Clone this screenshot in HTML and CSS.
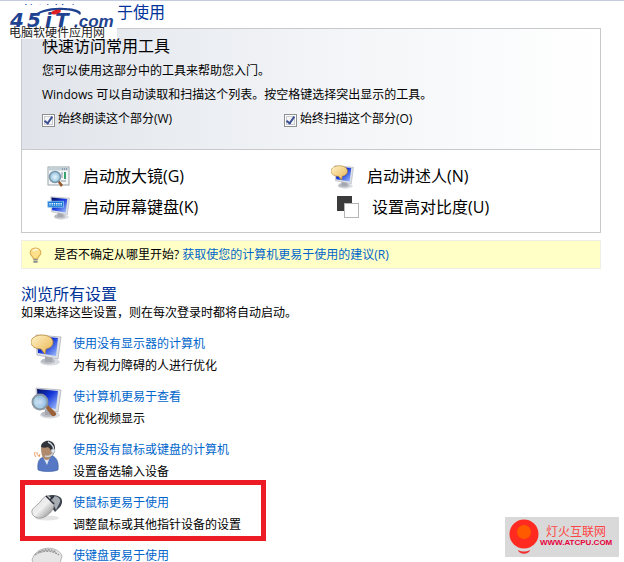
FILE: index.html
```html
<!DOCTYPE html>

<html lang="zh-CN">

  <head>

    <title>轻松访问中心</title>

    <meta charset="utf-8"/>

    <link rel="stylesheet" href="styles.css">

  </head>

  <body>

    <svg class="defs" width="0" height="0" aria-hidden="true">
      <defs>
        <linearGradient id="screen" x1="0" y1="0" x2="1" y2="1">
          <stop offset="0" stop-color="#06105c"/>
          <stop offset=".45" stop-color="#1233d8"/>
          <stop offset="1" stop-color="#a9c8ff"/>
        </linearGradient>
        <linearGradient id="bubble-fill" x1="0" y1="0" x2="1" y2="1">
          <stop offset="0" stop-color="#fff3cc"/>
          <stop offset="1" stop-color="#e9b44c"/>
        </linearGradient>
        <linearGradient id="silver" x1="0" y1="0" x2="1" y2="1">
          <stop offset="0" stop-color="#dcdcdc"/>
          <stop offset=".5" stop-color="#f0f0f0"/>
          <stop offset="1" stop-color="#777"/>
        </linearGradient>
        <radialGradient id="lens">
          <stop offset="0" stop-color="#e8f6fd"/>
          <stop offset="1" stop-color="#8fc1dd"/>
        </radialGradient>
        <symbol id="monitor" viewBox="0 0 32 32">
          <ellipse cx="19" cy="28" rx="10" ry="3.5" fill="#d9dce0"/>
          <ellipse cx="17" cy="27" rx="7" ry="3" fill="#b9bdc3"/>
          <path d="M14 21l8 2-1 5h-7z" fill="#a4a8ae"/>
          <path d="M5 1l25 2-3 22-21-4z" fill="#dde0e6" stroke="#a7abb3" stroke-width=".7"/>
          <path d="M6 2l21 2-2 18-18-3z" fill="url(#screen)"/>
        </symbol>
        <symbol id="bubble" viewBox="0 0 32 32">
          <path d="M11 1c6 0 11 3 11 7s-3 6-7 7l-1 5-4-5C4 15 0 12 0 8s5-7 11-7z" fill="url(#bubble-fill)" stroke="#b98a35" stroke-width=".8"/>
        </symbol>
        <symbol id="glass" viewBox="0 0 32 32">
          <path d="M14 20l3-2 8 8c1 2-2 4-4 3z" fill="#9a6038"/>
          <circle cx="9" cy="15" r="7.500" fill="url(#lens)" fill-opacity=".9" stroke="#8a98a5" stroke-width="2"/>
        </symbol>
      </defs>
    </svg>

    <main>
      <h1>使计算机更易于使用</h1>

      <section class="quick">
        <div class="intro">
          <h2>快速访问常用工具</h2>
          <p>您可以使用这部分中的工具来帮助您入门。</p>
          <p>Windows 可以自动读取和扫描这个列表。按空格键选择突出显示的工具。</p>
          <div class="options">
            <label><input type="checkbox" checked>始终朗读这个部分(W)</label>
            <label><input type="checkbox" checked>始终扫描这个部分(O)</label>
          </div>
        </div>
        <div class="tools">
          <a href="#magnifier">
            <svg class="tool-icon" viewBox="0 0 24 24">
              <rect x="1" y="2" width="21" height="18" fill="#f4f7f8" stroke="#9aa3a8"/>
              <path d="M2 4h19" stroke="#c3cfd6" stroke-width="3"/>
              <path d="M15 4h5" stroke="#4f6b86" stroke-dasharray="1 1"/>
              <path d="M18 7v7" stroke="#36a36c" stroke-width="2"/>
              <path d="M4 8h5M4 10h4M14 8h2M14 10h2M14 12h2M14 16h5" stroke="#8b979e"/>
              <path d="M10 16l2-1 4 5-2 2z" fill="#98572b"/>
              <circle cx="8" cy="12" r="5.500" fill="url(#lens)" stroke="#7c97aa" stroke-width="1.500"/>
            </svg>
            启动放大镜(G)
          </a>
          <a href="#narrator">
            <svg class="tool-icon" viewBox="0 0 32 32"><use href="#monitor"/><use href="#bubble"/></svg>
            启动讲述人(N)
          </a>
          <a href="#keyboard">
            <svg class="tool-icon" viewBox="0 0 32 32">
              <use href="#monitor"/>
              <path d="M1 7h21v8H1z" fill="#1679d8" stroke="#9cc9f2"/>
              <path d="M3 10h17M3 12h17" stroke="#e8f4ff" stroke-width="1.500" stroke-dasharray="2 1"/>
            </svg>
            启动屏幕键盘(K)
          </a>
          <a class="contrast" href="#contrast">
            <svg class="tool-icon" viewBox="0 0 24 24">
              <rect x="0" y="0" width="15" height="15" fill="#3b3b3b"/>
              <rect x="7.500" y="7.500" width="14" height="14" fill="#fff" stroke="#b5b5b5"/>
            </svg>
            设置高对比度(U)
          </a>
        </div>
      </section>

      <p class="tip">
        <svg class="bulb" viewBox="0 0 12 16">
          <path d="M6 1c3 0 5 2 5 4.500S8 9 8 11H4C4 9 1 8 1 5.500S3 1 6 1z" fill="#ffe08a" stroke="#d9a850"/>
          <path d="M4 4c1-2 3-2 4-1" fill="none" stroke="#fffbe6" stroke-width="1.500"/>
          <path d="M4 12h4M4 14h4" stroke="#8d8d8d" stroke-width="1.500"/>
        </svg>
        <span>是否不确定从哪里开始? <a href="#recommend">获取使您的计算机更易于使用的建议(R)</a></span>
      </p>

      <section class="browse">
        <h2>浏览所有设置</h2>
        <p>如果选择这些设置，则在每次登录时都将自动启动。</p>
        <ul>
          <li>
            <svg class="icon" viewBox="0 0 32 32"><use href="#monitor"/><use href="#bubble"/></svg>
            <div>
              <a href="#no-display">使用没有显示器的计算机</a>
              <p>为有视力障碍的人进行优化</p>
            </div>
          </li>
          <li>
            <svg class="icon" viewBox="0 0 32 32"><use href="#monitor"/><use href="#glass"/></svg>
            <div>
              <a href="#see">使计算机更易于查看</a>
              <p>优化视频显示</p>
            </div>
          </li>
          <li>
            <svg class="icon" viewBox="0 0 32 32">
              <path d="M7 30c-1-8 1-12 6-13l9-1c4 2 6 7 5 14-5 2-15 2-20 0z" fill="#5577c4" stroke="#3d5fa3" stroke-width=".6"/>
              <path d="M12 17h7l-3 8z" fill="#dfe6f4"/>
              <path d="M10 8c0-4 9-5 11 0 1 6-2 12-5 12-4 0-6-5-6-12z" fill="#b08a6c"/>
              <path d="M10 7c0-8 14-9 14 1 0 4-1 6-3 8 0-4-1-7-4-9-2 1-5 1-7 0z" fill="#30343a"/>
              <path d="M17 2c5 2 7 7 5 11-1 3-5 4-8 3" fill="none" stroke="#cdd4da" stroke-width="1.500"/>
              <circle cx="22" cy="11" r="2" fill="#e3e7ea" stroke="#a7afb6" stroke-width=".5"/>
              <path d="M4 12c-1 2 0 4 1 5M6 12c0 2 0 3 2 4M9 14l-1 3" fill="none" stroke="#ee9a5c"/>
            </svg>
            <div>
              <a href="#no-mouse">使用没有鼠标或键盘的计算机</a>
              <p>设置备选输入设备</p>
            </div>
          </li>
          <li class="marked">
            <svg class="icon" viewBox="0 0 32 32">
              <ellipse cx="16" cy="25" rx="12" ry="2.500" fill="#e4e4e4"/>
              <path d="M16 3c5-2 11-1 14 2 2 3 1 6-1 9l-5 5-6-8z" fill="#3d444f"/>
              <path d="M22 3c5 0 8 3 7 6l-4 8-4-9z" fill="#a9aeb5"/>
              <path d="M15 3c3-1 6 3 8 7 1 5-3 10-8 13-5 4-13 2-14-3-1-4 3-6 6-9 3-2 4-6 8-8z" fill="url(#silver)" stroke="#888" stroke-width=".7"/>
              <path d="M15 3l4 4 4-4M19 7l4 4" fill="none" stroke="#252c38" stroke-width="1.500"/>
            </svg>
            <div>
              <a href="#mouse">使鼠标更易于使用</a>
              <p>调整鼠标或其他指针设备的设置</p>
            </div>
          </li>
          <li>
            <svg class="icon" viewBox="0 0 32 32">
              <path d="M1 14C5 -1 27 -1 31 10l-4 14H5z" fill="#e6e6e6" stroke="#b5b5b5"/>
              <path d="M8 6c5-3 13-3 17 0M4 9c6-5 18-5 24 0" fill="none" stroke="#999" stroke-width="1.500" stroke-dasharray="2 1"/>
            </svg>
            <div>
              <a href="#keys">使键盘更易于使用</a>
            </div>
          </li>
        </ul>
      </section>
    </main>

    <div class="site-logo">
      <svg viewBox="0 0 117 34">
        <g class="site-name">
          <text x="10" y="22">4</text>
          <text x="27" y="22">5</text>
          <text x="45" y="22">i</text>
          <text x="55" y="22">T</text>
          <text class="dotcom" x="74" y="22">.com</text>
        </g>
        <path d="M32 12C38 5 52 2 64 3c10 0 20 3 16 7-3-4-12-5-20-5-12 0-20 3-28 7z" fill="#1f4391"/>
        <ellipse cx="56" cy="7" rx="5" ry="2" fill="#e02020" transform="rotate(-15 56 7)"/>
        <text class="site-sub" x="9" y="32">电脑软硬件应用网</text>
      </svg>
    </div>

    <div class="badge">
      <svg viewBox="0 0 30 36">
        <circle cx="15" cy="15" r="14.500" fill="#ff2a20"/>
        <circle cx="15" cy="13" r="7" fill="#ff5a00"/>
        <path d="M9 31c4 2 8 2 12 0-1 5-11 5-12 0z" fill="#f03030"/>
      </svg>
      <div>
        <b>灯火互联网</b>
        <span>WWW.ATCPU.COM</span>
      </div>
    </div>

  </body>

</html>
```
FILE: styles.css
```css
html {
  height: 100%;
  overflow: hidden;
}
body {
  position: relative;
  box-sizing: border-box;
  height: 100%;
  margin: 0;
  overflow: hidden;
  border-top: 1px solid #c3cbe0;
  color: black;
  background: white;
  font: 12px/24px "Open Sans", "Noto Sans CJK SC", sans-serif;
}
main {
  margin: 0 23px 0 21px;
}
h1, h2, p, ul {
  margin: 0;
  padding: 0;
}
h1, h2 {
  font-size: 16px;
  font-weight: normal;
}
h1 {
  color: #003399;
  line-height: 22px;
}
a {
  color: #0066cc;
  text-decoration: none;
}
.defs {
  position: absolute;
}

.quick {
  margin-top: 5px;
  border: 1px solid #c8c9cc;
}
.intro {
  padding: 5px 20px 18px;
  border-bottom: 1px solid #c8c9cc;
  background: linear-gradient(to right, #e0e4ea, #f2f4f7 50%, #ffffff);
}
.intro h2 {
  margin-bottom: 1px;
}
.options {
  display: grid;
  grid-template-columns: 242px 1fr;
}
.options label {
  display: flex;
  align-items: center;
  gap: 3px;
}
.options input {
  appearance: none;
  box-sizing: border-box;
  width: 13px;
  height: 13px;
  margin: 2px 0 0;
  border: 1px solid #8e8f8f;
  background: #f4f4f4;
  box-shadow: inset 0 0 0 1px #fff, inset 0 0 0 2px #c8ccd2;
}
.options input:checked::after {
  content: "";
  display: block;
  box-sizing: border-box;
  width: 5px;
  height: 9px;
  margin: 0 auto;
  border: solid #3a4f93;
  border-width: 0 2px 2px 0;
  transform: rotate(35deg);
}

.tools {
  display: grid;
  grid-template-columns: 284px 1fr;
  padding: 11px 0 9px 25px;
}
.tools a {
  display: flex;
  align-items: center;
  gap: 12px;
  color: black;
  font-size: 16px;
  line-height: 31px;
}
.tools .contrast {
  padding-left: 6px;
  gap: 11px;
}
.tool-icon {
  width: 24px;
  height: 24px;
}

.tip {
  display: flex;
  align-items: center;
  gap: 12px;
  margin-top: 7px;
  padding: 2px 7px 1px;
  border: 1px solid #eeeee6;
  background: #ffffc6;
}
.bulb {
  width: 13px;
  height: 17px;
}

.browse {
  margin-top: 15px;
}
.browse h2 {
  color: #003399;
  line-height: 20px;
}
.browse > p {
  line-height: 18px;
}
ul {
  display: grid;
  gap: 9px;
  margin-top: 11px;
  list-style: none;
}
li {
  position: relative;
  display: flex;
  gap: 10px;
  padding-left: 10px;
  line-height: 22px;
}
.icon {
  width: 32px;
  height: 32px;
  margin-top: 1px;
}
/* red frame drawn round the entry to pick */
.marked::after {
  content: "";
  position: absolute;
  top: -12px;
  left: -1px;
  box-sizing: border-box;
  width: 246px;
  height: 61px;
  border: 5px solid #ed1c24;
}

.site-logo {
  position: absolute;
  top: 4px;
  left: 0;
  width: 117px;
  height: 34px;
  background: white;
}
.site-logo svg {
  display: block;
}
.site-name {
  fill: #1f4391;
  font: italic bold 20px "DejaVu Sans", sans-serif;
}
.site-name .dotcom {
  font: italic bold 17px "Liberation Sans", sans-serif;
}
.site-sub {
  fill: #222;
  font: 12px "Noto Sans CJK SC", sans-serif;
}

.badge {
  position: absolute;
  right: 5px;
  bottom: 5px;
  display: flex;
  align-items: center;
  gap: 1px;
  box-sizing: border-box;
  width: 114px;
  height: 40px;
  padding: 0 4px;
  background: #d9d9d9;
}
.badge svg {
  flex: none;
  width: 30px;
  height: 36px;
}
.badge b, .badge span {
  display: block;
  line-height: 10px;
}
.badge b {
  padding-left: 6px;
  color: #ff4545;
  font-weight: normal;
  line-height: 12px;
}
.badge span {
  color: #e6003c;
  font: bold 8px/10px "Liberation Sans", sans-serif;
}
```
